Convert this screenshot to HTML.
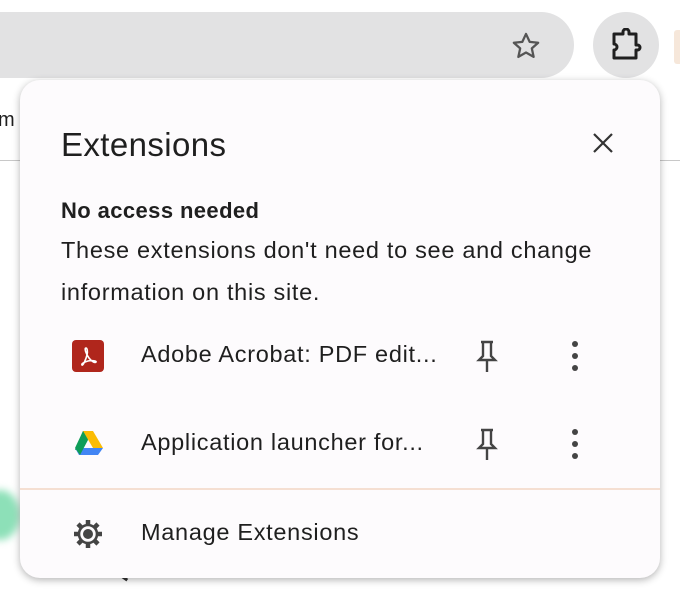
<!DOCTYPE html>
<html><head><style>
body{margin:0;width:680px;height:596px;background:#fff;position:relative;overflow:hidden;font-family:"Liberation Sans",sans-serif;color:#1f1f1f}
.abs{position:absolute}
.t{position:absolute;white-space:nowrap;font-size:23.5px;letter-spacing:0.7px;line-height:1}
</style></head><body>
<div class="abs" style="left:-40px;top:12px;width:614px;height:66px;border-radius:33px;background:#e2e2e3"></div>
<svg class="abs" style="left:509px;top:29px" width="34" height="34" viewBox="0 0 24 24"><path d="M12 3.5l2.6 5.6 6 .6-4.5 4 1.3 6-5.4-3.1-5.4 3.1 1.3-6-4.5-4 6-.6z" fill="none" stroke="#555" stroke-width="1.6" stroke-linejoin="round"/></svg>
<div class="abs" style="left:593px;top:12px;width:66px;height:66px;border-radius:33px;background:#e2e2e3"></div>
<svg class="abs" style="left:608px;top:28px" width="36" height="36" viewBox="0 0 36 36"><path d="M6 6h9v-2a3 3 0 0 1 6 0v2h7v11h1.5a2.5 2.5 0 0 1 0 5H28v8H6v-8a3 3 0 0 0 0-6z" fill="none" stroke="#1f1f1f" stroke-width="3" stroke-linejoin="round"/></svg>
<div class="abs" style="left:674px;top:30px;width:10px;height:34px;background:#f6e7da;border-radius:3px"></div>
<div class="t" style="left:-2px;top:110px;font-size:20px;letter-spacing:0">m</div>
<div class="abs" style="left:0;top:160px;width:680px;height:1px;background:#c8c8c8"></div>
<div class="abs" style="left:-20px;top:490px;width:40px;height:50px;background:#8de0b8;border-radius:50%;filter:blur(4px)"></div>
<div class="abs" style="left:100px;top:570px;width:30px;height:3px;background:#333;transform:rotate(35deg)"></div>
<div class="abs" style="left:20px;top:80px;width:640px;height:498px;border-radius:20px;background:#fdfbfd;box-shadow:0 2px 8px rgba(0,0,0,.3)">
<div class="t" style="left:41px;top:48px;font-size:33px;letter-spacing:0.4px">Extensions</div>
<svg class="abs" style="left:570px;top:50px" width="26" height="26" viewBox="0 0 26 26"><path d="M4 4L22 22M22 4L4 22" stroke="#333" stroke-width="2.2"/></svg>
<div class="t" style="left:41px;top:120px;font-weight:bold;font-size:22px;letter-spacing:0.4px">No access needed</div>
<div class="t" style="left:41px;top:159px">These extensions don't need to see and change</div>
<div class="t" style="left:41px;top:201px">information on this site.</div>
<div class="abs" style="left:52px;top:260px;width:32px;height:32px;border-radius:4px;background:#b0261c"></div>
<svg class="abs" style="left:52px;top:260px" width="32" height="32" viewBox="0 0 32 32"><path d="M14 8c-2 0 0 6 3 10s6 5 7 4-4-2-8-1-7 3-6 4 4-6 5-10 0-7-1-7z" fill="none" stroke="#fff" stroke-width="1.6"/></svg>
<div class="t" style="left:121px;top:263px">Adobe Acrobat: PDF edit...</div>
<svg class="abs" style="left:52px;top:348px" width="32" height="30" viewBox="0 0 32 30"><path d="M11 3h10l-6 10-5 9-7 0z" fill="#1ea362"/><path d="M11 3h10l10 17H21z" fill="#fbbc04"/><path d="M3 20h28l-5 7H7z" fill="#4285f4"/><path d="M11 3l5 9-8 15-5-7z" fill="#0f9d58"/></svg>
<div class="t" style="left:121px;top:351px">Application launcher for...</div>
<svg class="abs" style="left:455px;top:258px" width="24" height="36" viewBox="0 0 24 36"><path d="M6 4h12M8 4v14l-4 4h16l-4-4V4M12 22v12" fill="none" stroke="#444" stroke-width="2.4"/></svg>
<svg class="abs" style="left:455px;top:346px" width="24" height="36" viewBox="0 0 24 36"><path d="M6 4h12M8 4v14l-4 4h16l-4-4V4M12 22v12" fill="none" stroke="#444" stroke-width="2.4"/></svg>
<svg class="abs" style="left:550px;top:260px" width="10" height="32"><circle cx="5" cy="4" r="3" fill="#444"/><circle cx="5" cy="16" r="3" fill="#444"/><circle cx="5" cy="28" r="3" fill="#444"/></svg>
<svg class="abs" style="left:550px;top:348px" width="10" height="32"><circle cx="5" cy="4" r="3" fill="#444"/><circle cx="5" cy="16" r="3" fill="#444"/><circle cx="5" cy="28" r="3" fill="#444"/></svg>
<div class="abs" style="left:0;top:408px;width:640px;height:2px;background:#f5dfd2"></div>
<svg class="abs" style="left:52px;top:438px" width="32" height="32" viewBox="0 0 32 32"><g fill="none" stroke="#444" stroke-width="2.6"><circle cx="16" cy="16" r="9"/></g><circle cx="16" cy="16" r="5" fill="#444"/><g stroke="#444" stroke-width="4.5"><path d="M16 2v5M16 25v5M2 16h5M25 16h5M6 6l3.5 3.5M22.5 22.5L26 26M6 26l3.5-3.5M22.5 9.5L26 6"/></g></svg>
<div class="t" style="left:121px;top:441px">Manage Extensions</div>
</div>
</body></html>
